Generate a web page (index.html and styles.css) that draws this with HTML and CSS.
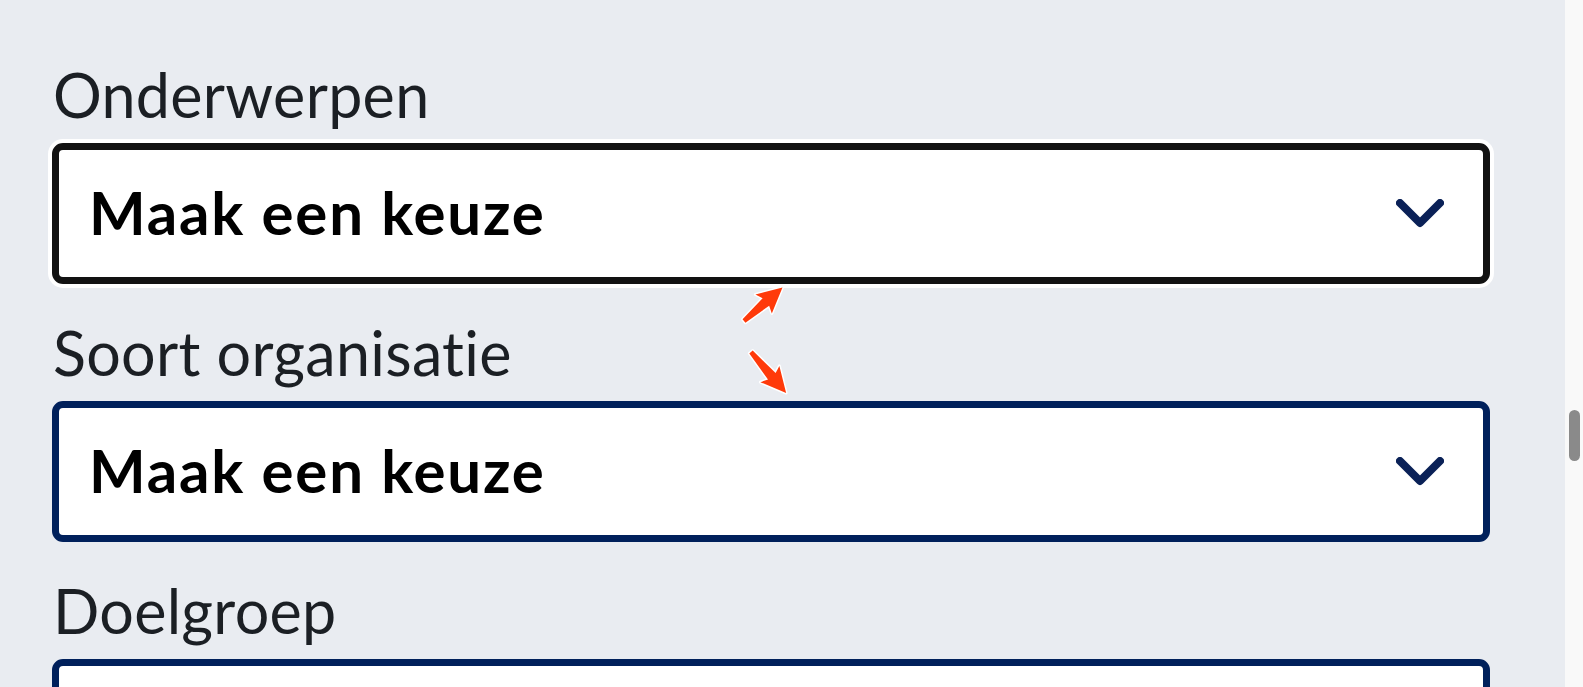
FILE: index.html
```html
<!DOCTYPE html>
<html lang="nl">
<head>
<meta charset="utf-8">
<title>Filters</title>
<link rel="stylesheet" href="styles.css">
</head>
<body>
<div class="window">
  <main class="page">
    <div class="field">
      <label class="field-label">Onderwerpen</label>
      <div class="select select-focus">
        <span class="select-text">Maak een keuze</span>
        <svg class="chevron" viewBox="0 0 48 30" width="48" height="30" aria-hidden="true"><path d="M4 4 L24 24 L44 4"/></svg>
      </div>
    </div>
    <div class="field">
      <label class="field-label">Soort organisatie</label>
      <div class="select">
        <span class="select-text">Maak een keuze</span>
        <svg class="chevron" viewBox="0 0 48 30" width="48" height="30" aria-hidden="true"><path d="M4 4 L24 24 L44 4"/></svg>
      </div>
    </div>
    <div class="field">
      <label class="field-label">Doelgroep</label>
      <div class="select">
        <span class="select-text">Maak een keuze</span>
        <svg class="chevron" viewBox="0 0 48 30" width="48" height="30" aria-hidden="true"><path d="M4 4 L24 24 L44 4"/></svg>
      </div>
    </div>
    <svg class="annotations" viewBox="0 0 1565 687" width="1565" height="687" aria-hidden="true">
      <g class="arrow" transform="translate(744 321) rotate(-41)">
        <polygon points="0,-2.2 29,-5 26,-12.5 51,0 26,12.5 29,5 0,2.2"/>
      </g>
      <g class="arrow" transform="translate(751 352) rotate(49.4)">
        <polygon points="0,-2.2 32,-5 29,-12.5 54,0 29,12.5 32,5 0,2.2"/>
      </g>
    </svg>
  </main>
  <div class="scrollbar"><div class="scroll-thumb"></div></div>
</div>
</body>
</html>
```
FILE: styles.css
```css
html, body {
  margin: 0;
  padding: 0;
  height: 100%;
  overflow: hidden;
}

.window {
  display: flex;
  height: 687px;
  width: 1583px;
}

.page {
  position: relative;
  flex: 0 0 1565px;
  background: #e9ecf1;
  padding: 65px 0 0 52px;
  box-sizing: border-box;
  display: flex;
  flex-direction: column;
  gap: 39px;
  overflow: hidden;
}

.field {
  display: flex;
  flex-direction: column;
  width: 1438px;
}

.field-label {
  font-family: Lato, "Liberation Sans", sans-serif;
  font-weight: 400;
  font-size: 61px;
  line-height: 60px;
  color: #1b1f24;
  margin: 0 0 18px 1px;
  letter-spacing: 0.3px;
}

.select {
  box-sizing: border-box;
  height: 141px;
  border: 7px solid #00205b;
  border-radius: 11px;
  background: #ffffff;
  display: flex;
  align-items: center;
  justify-content: space-between;
  padding: 0 39px 3px 30px;
  flex-shrink: 0;
}

.select-focus {
  border-color: #121212;
  box-shadow: 0 0 0 4px #ffffff;
}

.select-text {
  font-family: Lato, "Liberation Sans", sans-serif;
  font-weight: 700;
  font-size: 60px;
  line-height: 1.2;
  color: #000000;
  letter-spacing: 1.8px;
}

.chevron {
  display: block;
  margin-top: 3px;
}

.chevron path {
  fill: none;
  stroke: #0a2157;
  stroke-width: 8;
  stroke-linecap: round;
  stroke-linejoin: round;
}

.annotations {
  position: absolute;
  left: 0;
  top: 0;
  pointer-events: none;
}

.arrow polygon {
  fill: #ff3a0a;
  stroke: #ffffff;
  stroke-width: 3;
  stroke-linejoin: round;
  paint-order: stroke;
}

.scrollbar {
  flex: 0 0 18px;
  background: #f9f9f9;
  padding-top: 410px;
  box-sizing: border-box;
}

.scroll-thumb {
  width: 11px;
  height: 51px;
  margin-left: 4px;
  border-radius: 6px;
  background: #8a8a8a;
}
```
